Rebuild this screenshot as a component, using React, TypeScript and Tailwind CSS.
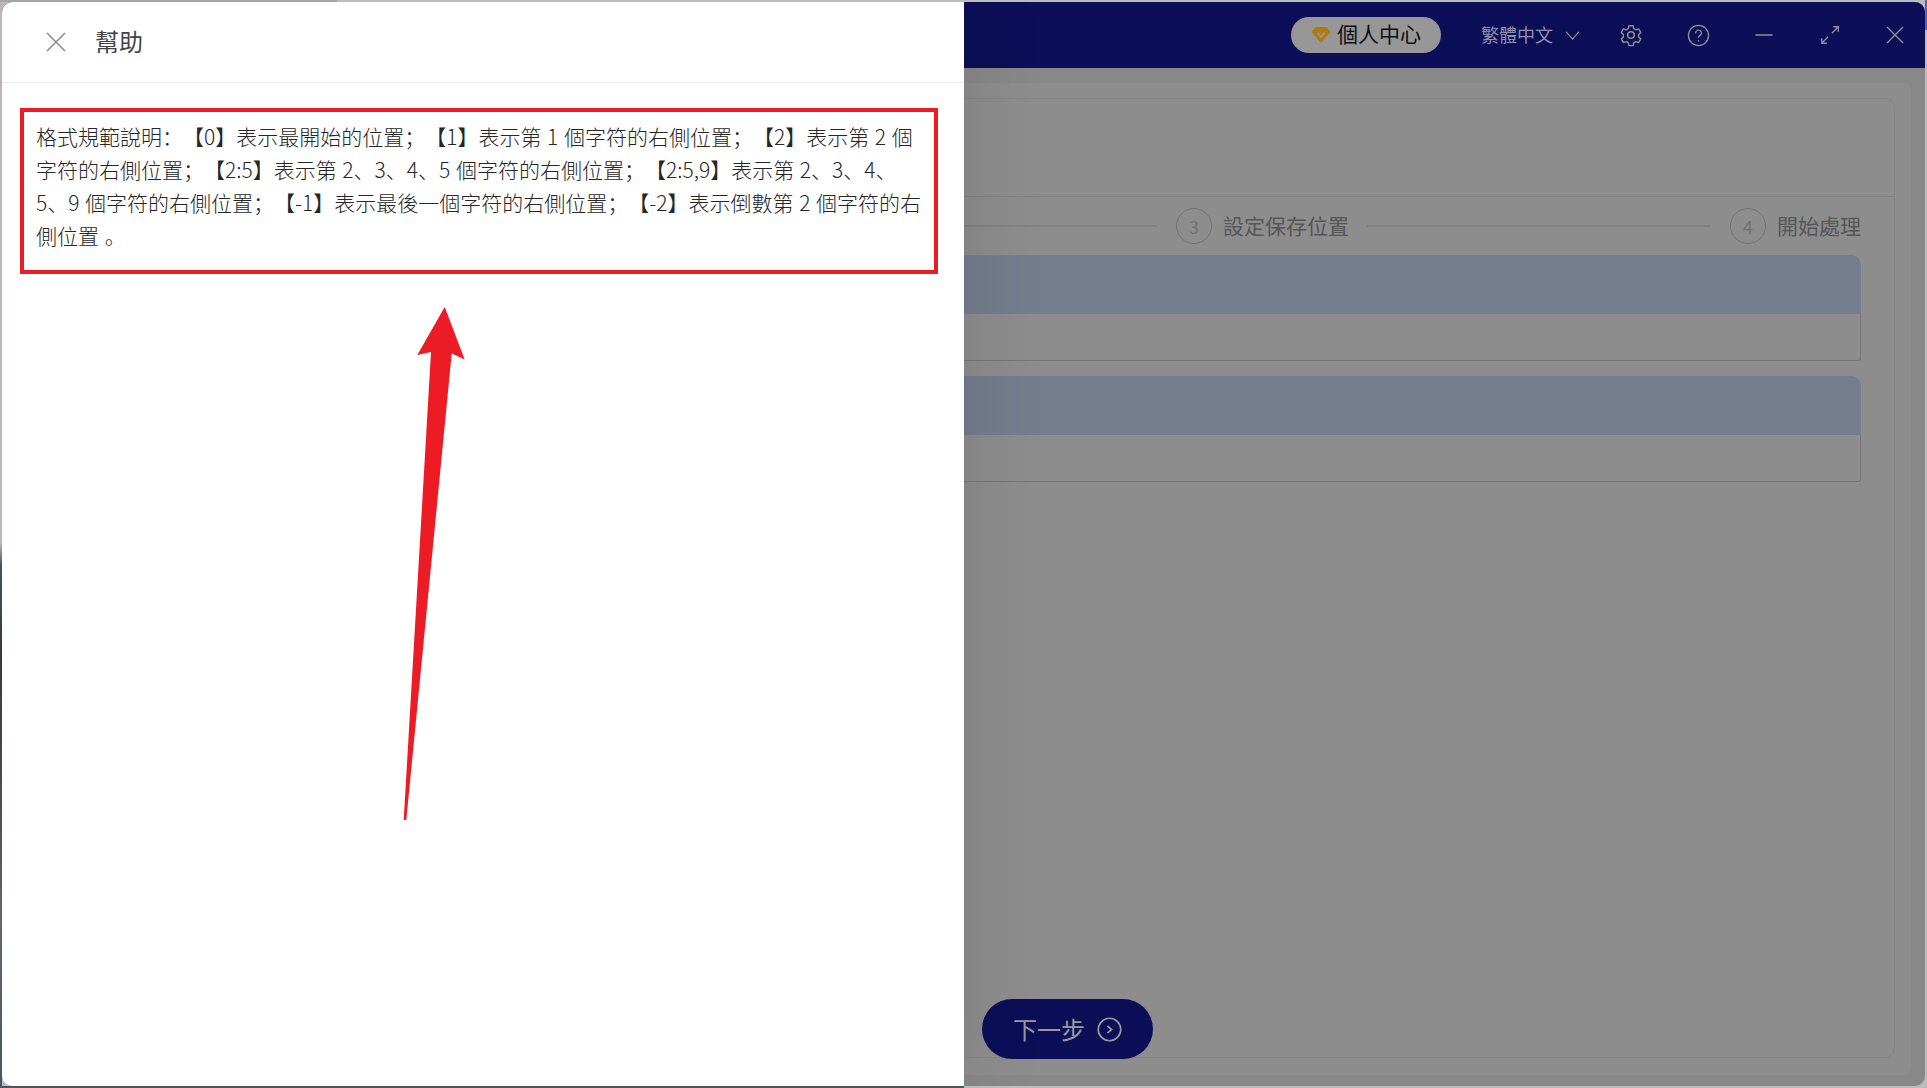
const HELP_LINES = [
  '格式規範說明：【0】表示最開始的位置；【1】表示第 1 個字符的右側位置；【2】表示第 2 個',
  '字符的右側位置；【2:5】表示第 2、3、4、5 個字符的右側位置；【2:5,9】表示第 2、3、4、',
  '5、9 個字符的右側位置；【-1】表示最後一個字符的右側位置；【-2】表示倒數第 2 個字符的右',
  '側位置 。',
];

function Step({ num, label }: { num: number; label: string }) {
  return (
    <div className="flex shrink-0 items-center gap-[11px]">
      <span className="flex h-[36px] w-[36px] items-center justify-center rounded-full border border-[#727272] text-[18px] text-[#727272]">
        {num}
      </span>
      <span className="pb-[2px] text-[21px] leading-none text-[#565656]">{label}</span>
    </div>
  );
}

function Section() {
  return (
    <div>
      <div className="h-[59px] rounded-t-[10px] bg-[#747d8d]" />
      <div className="h-[47px] rounded-b-[3px] border border-t-0 border-[#767676]" />
    </div>
  );
}

function WindowButton({ children }: { children: React.ReactNode }) {
  return <span className="flex h-[24px] w-[24px] items-center justify-center text-[#8f8f93]">{children}</span>;
}

export default function App() {
  return (
    <div
      className="relative h-[1088px] w-[1927px] overflow-hidden bg-[#bcbcbc] p-[2px] font-['Noto_Sans_CJK_SC','Noto_Sans_CJK_TC',sans-serif]"
    >
      {/* desktop showing round the window */}
      <div className="absolute left-0 top-0 h-full w-[2px] bg-[linear-gradient(180deg,#bdb3b3_0%,#bdb3b3_50%,#3c5660_52%,#37393a_60%,#5a4c50_75%,#66666f_85%,#3f5a62_100%)]" />
      <div className="absolute left-0 top-0 h-[2px] w-[337px] bg-[#a8a4a4]" />
      <div className="absolute bottom-0 left-0 h-[2px] w-[964px] bg-[#47585a]" />
      <div className="absolute right-0 top-0 h-[30px] w-[2px] bg-[#4c67b0]" />

      <div className="relative flex h-full flex-col overflow-hidden rounded-[10px] bg-[#888888]">
        <header className="flex h-[66px] shrink-0 items-center justify-end bg-[#0c0f57] pr-[17px]">
          <div className="flex h-[36px] w-[150px] items-center gap-[6px] rounded-full bg-[#979797] pl-[20px]">
            <svg viewBox="0 0 20 18" className="h-[18px] w-[20px] shrink-0">
              <path d="M4.500 1h11L19.500 6 10 17 .5 6z" fill="#b0790c" />
              <path d="M6.500 6.500 10 11l3.500-4.500" fill="none" stroke="#979797" strokeWidth="2" />
            </svg>
            <span className="pb-[3px] text-[21px] leading-none text-[#0e0e14]">個人中心</span>
          </div>
          <div className="ml-[40px] flex items-center text-[#8f90aa]">
            <span className="pb-[2px] text-[18px] leading-none">繁體中文</span>
            <svg viewBox="0 0 16 10" className="ml-[12px] h-[9px] w-[15px]" fill="none" stroke="#8f8f93" strokeWidth="1.300">
              <path d="m1 1 7 8 7-8" />
            </svg>
          </div>
          <div className="ml-[39px] flex items-center gap-[42px]">
            <span className="mr-px">
              <WindowButton>
                <svg viewBox="0 0 24 24" className="h-[24px] w-[24px]" fill="none" stroke="currentColor" strokeWidth="1.500" strokeLinejoin="round">
                  <path d="M9.700 2.500h4.600l.6 3 2.500 1.400 2.900-1 2.300 4-2.300 2v2.800l2.300 2-2.300 4-2.900-1-2.500 1.400-.6 3H9.700l-.6-3-2.500-1.400-2.900 1-2.300-4 2.300-2v-2.800l-2.300-2 2.300-4 2.900 1 2.500-1.400z" transform="translate(12 12) scale(.92) translate(-12 -12.500)" />
                  <circle cx="12" cy="12" r="3.300" />
                </svg>
              </WindowButton>
            </span>
            <WindowButton>
              <svg viewBox="0 0 24 24" className="h-[23px] w-[23px]" fill="none" stroke="currentColor" strokeWidth="1.400" strokeLinecap="round">
                <circle cx="12" cy="12" r="10.500" />
                <path d="M9 9.300a3 3 0 1 1 4.600 2.600c-1 .6-1.600 1.200-1.600 2.300" />
                <path d="M12 17.500h.01" strokeWidth="1.800" />
              </svg>
            </WindowButton>
            <WindowButton>
              <svg viewBox="0 0 24 24" className="h-[24px] w-[24px]" fill="none" stroke="currentColor" strokeWidth="1.500">
                <path d="M3.500 12h17" />
              </svg>
            </WindowButton>
            <WindowButton>
              <svg viewBox="0 0 24 24" className="h-[22px] w-[22px]" fill="none" stroke="currentColor" strokeWidth="1.500">
                <path d="M14 10l7-7M15.500 3H21v5.500M10 14l-7 7M3 15.500V21h5.500" />
              </svg>
            </WindowButton>
            <WindowButton>
              <svg viewBox="0 0 24 24" className="h-[24px] w-[24px] -translate-x-px" fill="none" stroke="currentColor" strokeWidth="1.400">
                <path d="m4 4 16 16M20 4 4 20" />
              </svg>
            </WindowButton>
          </div>
        </header>

        <main className="flex min-h-0 flex-1 flex-col pb-[11px] pl-[8px] pr-[14px] pt-[15px]">
          <div className="flex min-h-0 flex-1 flex-col rounded-[8px] bg-[#8d8d8d] pb-[17px] pl-[16px] pr-[16px] pt-[15px]">
            <div className="flex min-h-0 flex-1 flex-col rounded-[10px] border border-[#868686]">
              <div className="h-[98px] shrink-0 border-b border-[#828282]" />
              <div className="flex h-[58px] shrink-0 items-center pr-[33px]">
                <span className="h-[2px] flex-1 bg-[#808080]" />
                <span className="w-[19px]" />
                <Step num={3} label="設定保存位置" />
                <span className="ml-[18px] mr-[19px] h-[2px] w-[344px] shrink-0 bg-[#808080]" />
                <Step num={4} label="開始處理" />
              </div>
              <div className="flex flex-col gap-[15px] pr-[33px]">
                <Section />
                <Section />
              </div>
              <div className="-mb-[2px] ml-[955px] mt-auto">
                <button className="flex h-[60px] w-[171px] items-center rounded-full bg-[#0c0f57] pl-[31px] text-[24px] leading-none text-[#9a9a9a]">
                  下一步
                  <svg viewBox="0 0 24 24" className="ml-[12px] h-[25px] w-[25px]" fill="none" stroke="currentColor" strokeWidth="1.600">
                    <circle cx="12" cy="12" r="10.800" />
                    <path d="m10 8.500 4 3.500-4 3.500" />
                  </svg>
                </button>
              </div>
            </div>
          </div>
        </main>

        {/* help drawer */}
        <aside className="absolute bottom-0 left-0 top-0 flex w-[962px] flex-col bg-white shadow-[0_0_80px_rgba(0,0,0,0.12)]">
          <div className="flex h-[81px] shrink-0 items-center border-b border-[#ededed] pl-[42px]">
            <svg viewBox="0 0 24 24" className="h-[24px] w-[24px]" fill="none" stroke="#8a8a8a" strokeWidth="1.500">
              <path d="m3 3 18 18M21 3 3 21" />
            </svg>
            <span className="ml-[27px] pb-[2px] text-[24px] leading-none text-[#444444]">幫助</span>
          </div>
          <div className="pl-[18px] pt-[25px]">
            <div className="h-[166px] w-[918px] border-[4px] border-[#ed1c24] pl-[12px] pt-[8px] text-[21px] font-light leading-[33px] text-[#262626] [text-spacing-trim:space-all] [word-spacing:1px]">
              {HELP_LINES.map((line) => (
                <div key={line} className="whitespace-nowrap">
                  {line}
                </div>
              ))}
            </div>
          </div>
          {/* annotation arrow */}
          <svg className="absolute left-0 top-0 h-full w-full" viewBox="0 0 962 1084">
            <polygon
              points="442.700,305 415.300,353 429,350 401.700,818 404.300,818 449.700,351.600 462.700,357.600"
              fill="#ed1c24"
            />
          </svg>
        </aside>
      </div>
    </div>
  );
}
